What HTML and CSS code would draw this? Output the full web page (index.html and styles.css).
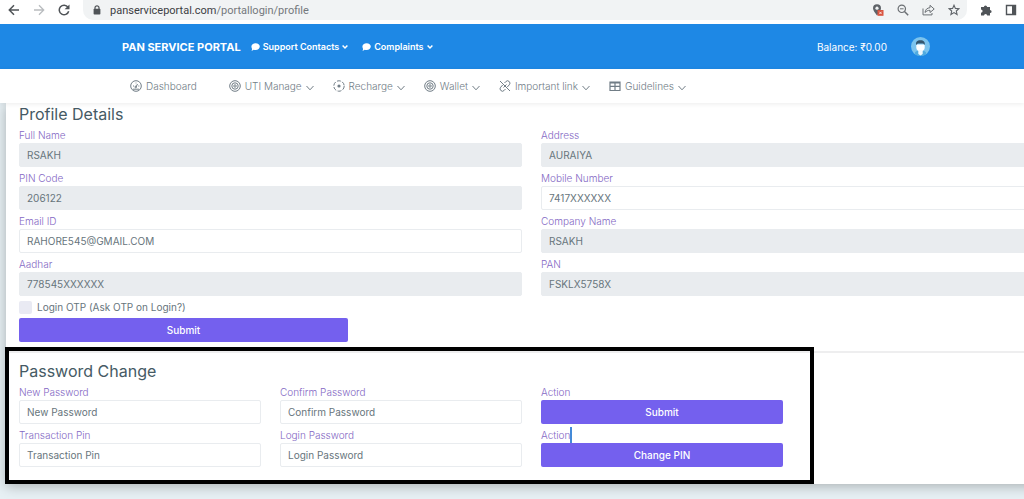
FILE: index.html
```html
<!DOCTYPE html>
<html lang="en">
<head>
<meta charset="utf-8">
<meta name="viewport" content="width=device-width, initial-scale=1">
<title>Profile - PAN Service Portal</title>
<link rel="stylesheet" href="styles.css">
</head>
<body>
<svg class="sprite" aria-hidden="true">
  <symbol id="chev" viewBox="0 0 8 6"><path d="M.5 1 4 4.800 7.500 1" fill="none" stroke="currentColor"/></symbol>
  <symbol id="caret" viewBox="0 0 6 6"><path d="M.6 1.500 3 4l2.400-2.500" fill="none" stroke="currentColor" stroke-width="1.500"/></symbol>
  <symbol id="chat" viewBox="0 0 9 8"><path d="M4.600.3C7 .3 8.800 1.700 8.800 3.600S7 7 4.600 7c-.7 0-1.300-.1-1.900-.3-.6.5-1.500.9-2.500.9.500-.5.900-1.100.9-1.700C.7 5.300.4 4.500.4 3.600.4 1.700 2.200.3 4.600.3z" fill="currentColor"/></symbol>
  <symbol id="target" viewBox="0 0 12 12"><g fill="none" stroke="currentColor"><circle cx="6" cy="6" r="5.300"/><circle cx="6" cy="6" r="3.200"/><circle cx="6" cy="6" r="1.200"/></g></symbol>
</svg>

<div class="browser">
  <button class="tool" aria-label="Back"><svg width="12" height="12" viewBox="0 0 12 12"><path d="M11 6H1.500M6 1.300 1.300 6 6 10.700" fill="none" stroke="#4f5357" stroke-width="1.500"/></svg></button>
  <button class="tool" aria-label="Forward"><svg width="12" height="12" viewBox="0 0 12 12"><path d="M1 6h9.500M6 1.300 10.700 6 6 10.700" fill="none" stroke="#b9bcbf" stroke-width="1.300"/></svg></button>
  <button class="tool" aria-label="Reload"><svg width="12" height="12" viewBox="0 0 12 12"><path d="M10 3.200A4.800 4.800 0 1 0 10.700 7.300" fill="none" stroke="#4f5357" stroke-width="1.500"/><path d="M11.500.4v4.900H6.600z" fill="#4f5357"/></svg></button>
  <div class="address">
    <svg width="8" height="10" viewBox="0 0 8 10"><path d="M2 4V2.800a2 2 0 0 1 4 0V4" fill="none" stroke="#4f5357" stroke-width="1.200"/><rect x=".6" y="3.700" width="6.800" height="5.800" rx=".8" fill="#4f5357"/></svg>
    <span class="url">panserviceportal.com<span class="path">/portallogin/profile</span></span>
    <div class="address-tools">
      <button class="tool" aria-label="Location blocked"><svg width="12" height="12" viewBox="0 0 12 12"><path d="M5 .2a4 4 0 0 0-4 4c0 2.600 4 7.200 4 7.200s4-4.600 4-7.200a4 4 0 0 0-4-4z" fill="#5f6368"/><circle cx="5" cy="4.200" r="1.600" fill="#f1f3f4"/><rect x="5.500" y="6" width="6" height="5.800" fill="#d8513c"/><path d="m7.300 7.700 2.400 2.400m0-2.400-2.400 2.400" stroke="#fff" stroke-width=".8"/></svg></button>
      <button class="tool" aria-label="Zoom"><svg width="12" height="12" viewBox="0 0 12 12"><g fill="none" stroke="#6c7074"><circle cx="4.800" cy="4.800" r="3.700" stroke-width="1.200"/><path d="m7.500 7.500 3.700 3.700" stroke-width="1.500"/><path d="M3 4.800h3.600"/></g></svg></button>
      <button class="tool" aria-label="Share"><svg width="13" height="12" viewBox="0 0 13 12"><path d="M1 4.500v6.400h9V9M3 8.500c.3-3 2.200-4.600 5-4.800V1.300L12.200 5 8 8.500V6.300C5.800 6.300 4.300 7 3 8.500z" fill="none" stroke="#6c7074"/></svg></button>
      <button class="tool" aria-label="Bookmark"><svg width="12" height="12" viewBox="0 0 12 12"><path d="m6 1.200 1.400 3.200 3.500.3-2.600 2.300.8 3.500L6 8.600l-3.100 1.900.8-3.500L1.100 4.700l3.500-.3z" fill="none" stroke="#5f6368" stroke-width="1.100"/></svg></button>
    </div>
  </div>
  <button class="tool" aria-label="Extensions"><svg width="12" height="12" viewBox="0 0 12 12"><path d="M1 3h2.900a1.600 1.600 0 1 1 3.200 0H10v2.900a1.600 1.600 0 1 1 0 3.200V11.500H7.200a1.600 1.600 0 0 0-3.200 0H1V8.700a1.600 1.600 0 0 0 0-3.200z" fill="#505458"/></svg></button>
  <button class="tool" aria-label="Side panel"><svg width="12" height="12" viewBox="0 0 12 12"><path d="M1.500 1.500h9v9h-9z" fill="none" stroke="#505458" stroke-width="1.400"/><path d="M7 1h4v10H7z" fill="#505458"/></svg></button>
</div>

<header class="header">
  <a class="brand" href="#">PAN SERVICE PORTAL</a>
  <a class="head-link" href="#"><svg width="9" height="8"><use href="#chat"/></svg>Support Contacts<svg width="6" height="6"><use href="#caret"/></svg></a>
  <a class="head-link" href="#"><svg width="9" height="8"><use href="#chat"/></svg>Complaints<svg width="6" height="6"><use href="#caret"/></svg></a>
  <span class="balance">Balance: ₹0.00</span>
  <button class="avatar" aria-label="Account"><svg width="19" height="19" viewBox="0 0 19 19"><circle cx="9.500" cy="9.500" r="9.500" fill="#7cc4ee"/><path d="M3.500 17c.3-2.600 2.600-3.500 6-3.500s5.700.9 6 3.500a9.500 9.500 0 0 1-12 0z" fill="#4faae0"/><path d="M5.300 7.500h8.400v3.300c0 2-1.800 3.600-4.200 3.600s-4.200-1.600-4.200-3.600z" fill="#fff"/><path d="M7.300 13h4.400v4l-2.200 1.500L7.300 17z" fill="#eef8fd"/><path d="M5.200 8c-.8-3 1-4.800 4.500-4.700 2.800 0 4.700 1.700 4 4.700l-1.500-1.400H6.800z" fill="#35566e"/></svg></button>
</header>

<nav class="menu">
  <a class="menu-item wide" href="#"><svg width="12" height="12" viewBox="0 0 12 12"><g fill="none" stroke="currentColor"><circle cx="6" cy="6" r="5.300"/><path d="M2.800 9.200h6.400M5.800 7.300 7.500 4M3 6h1M8.300 6h1M6 2.600v.8"/><circle cx="5.700" cy="7" r=".8"/></g></svg>Dashboard</a>
  <a class="menu-item" href="#"><svg width="12" height="12"><use href="#target"/></svg>UTI Manage<svg class="chev" width="8" height="6"><use href="#chev"/></svg></a>
  <a class="menu-item" href="#"><svg width="12" height="12" viewBox="0 0 12 12"><circle cx="6" cy="6" r="5.200" fill="none" stroke="currentColor" stroke-dasharray="4 1.440"/><circle cx="6" cy="6" r="1.600" fill="currentColor"/></svg>Recharge<svg class="chev" width="8" height="6"><use href="#chev"/></svg></a>
  <a class="menu-item" href="#"><svg width="12" height="12"><use href="#target"/></svg>Wallet<svg class="chev" width="8" height="6"><use href="#chev"/></svg></a>
  <a class="menu-item" href="#"><svg width="12" height="12" viewBox="0 0 12 12"><path d="m5.500 3 1.300-1.400a2.300 2.300 0 0 1 3.500 3.200L8.300 7M6.500 9l-1.300 1.400A2.300 2.300 0 0 1 1.700 7.200L3.700 5M1 1l10 10M4.500 7.500l3-3" fill="none" stroke="currentColor"/></svg>Important link<svg class="chev" width="8" height="6"><use href="#chev"/></svg></a>
  <a class="menu-item" href="#"><svg width="12" height="12" viewBox="0 0 12 12"><path d="M1 2h10v8.500H1zM1 3h10M1 6.300h10M6 2v8.500" fill="none" stroke="currentColor" stroke-width="1.200"/></svg>Guidelines<svg class="chev" width="8" height="6"><use href="#chev"/></svg></a>
</nav>

<main class="page">
  <div class="card">
    <form class="section profile">
      <h2 class="title">Profile Details</h2>
      <div class="grid halves">
        <div class="field"><label for="name">Full Name</label><input id="name" value="RSAKH" readonly class="locked"></div>
        <div class="field"><label for="addr">Address</label><input id="addr" value="AURAIYA" readonly class="locked"></div>
        <div class="field"><label for="pincode">PIN Code</label><input id="pincode" value="206122" readonly class="locked"></div>
        <div class="field"><label for="mobile">Mobile Number</label><input id="mobile" value="7417XXXXXX"></div>
        <div class="field"><label for="email">Email ID</label><input id="email" value="RAHORE545@GMAIL.COM"></div>
        <div class="field"><label for="company">Company Name</label><input id="company" value="RSAKH" readonly class="locked"></div>
        <div class="field"><label for="aadhar">Aadhar</label><input id="aadhar" value="778545XXXXXX" readonly class="locked"></div>
        <div class="field"><label for="pan">PAN</label><input id="pan" value="FSKLX5758X" readonly class="locked"></div>
      </div>
      <div class="check"><input type="checkbox" id="otp"><label for="otp">Login OTP (Ask OTP on Login?)</label></div>
      <div class="grid thirds"><button type="button" class="btn">Submit</button></div>
    </form>
    <form class="section password">
      <div class="highlight"></div>
      <h2 class="title">Password Change</h2>
      <div class="grid quarters">
        <div class="field"><label for="newpw">New Password</label><input id="newpw" type="password" placeholder="New Password"></div>
        <div class="field"><label for="confpw">Confirm Password</label><input id="confpw" type="password" placeholder="Confirm Password"></div>
        <div class="field"><label for="dosubmit">Action</label><button type="button" id="dosubmit" class="btn">Submit</button></div>
        <div class="field row-start"><label for="tpin">Transaction Pin</label><input id="tpin" type="password" placeholder="Transaction Pin"></div>
        <div class="field"><label for="loginpw">Login Password</label><input id="loginpw" type="password" placeholder="Login Password"></div>
        <div class="field"><label for="dopin" class="with-cursor">Action</label><button type="button" id="dopin" class="btn">Change PIN</button></div>
      </div>
    </form>
  </div>
</main>
</body>
</html>
```
FILE: styles.css
```css
* { box-sizing: border-box; }

body {
  margin: 0;
  min-height: 100vh;
  overflow: hidden;
  background: #e7f0f4;
  font-family: Inter, "Liberation Sans", sans-serif;
  font-size: 10px;
  color: #67757c;
}

a { color: inherit; text-decoration: none; }
button, input { font: inherit; color: inherit; margin: 0; }
svg { flex: none; display: block; }
.sprite { position: absolute; width: 0; height: 0; }

/* Browser toolbar */
.browser {
  display: flex;
  align-items: center;
  gap: 13px;
  height: 24px;
  padding: 0 7px 4px 8px;
  background: #fff;
}
.tool { border: 0; padding: 0; background: none; }
.address {
  flex: 1;
  display: flex;
  align-items: center;
  gap: 9px;
  height: 20px;
  padding: 0 7px 0 10px;
  border-radius: 0 0 10px 10px;
  background: #f1f3f4;
}
.url { font-family: Roboto, sans-serif; font-size: 11px; color: #3c4043; }
.path { color: #74787c; }
.address-tools { display: flex; gap: 13px; margin-left: auto; }

/* Blue header */
.header {
  display: flex;
  align-items: center;
  height: 45px;
  padding: 0 94px 0 122px;
  background: #1e88e5;
  color: #fff;
}
.brand { font-size: 11px; font-weight: 700; margin-right: 10px; }
.head-link {
  display: flex;
  align-items: center;
  gap: 3px;
  margin-right: 14px;
  font-size: 9px;
  font-weight: 600;
}
.balance { margin-left: auto; margin-right: 24px; font-weight: 400; }
.avatar { border: 0; padding: 0; background: none; }

/* Menu */
.menu {
  position: relative;
  display: flex;
  align-items: center;
  gap: 19px;
  height: 34px;
  padding: 0 130px;
  background: #fff;
  box-shadow: 0 1px 5px rgba(0, 0, 0, .08);
  font-weight: 300;
  color: #717d86;
  white-space: nowrap;
}
.menu-item { display: flex; align-items: center; gap: 4px; }
.wide { margin-right: 13px; }
.chev { margin-top: 3px; }

/* Profile card, wider than the window on its right side */
.page { padding-left: 6px; }
.card {
  margin-right: -33px;
  background: #fff;
  box-shadow: 0 2px 12px rgba(0, 0, 0, .28);
}
.section { padding: 0 13px; }
.profile { padding-bottom: 9px; border-bottom: 2px solid #eeeeef; }
.password { position: relative; padding-top: 7px; padding-bottom: 17px; }
.title {
  margin: 0 0 2px;
  font-size: 16px;
  font-weight: 400;
  line-height: 22px;
  color: #455a64;
}
.grid { display: grid; gap: 3px 19px; }
.halves { grid-template-columns: repeat(2, 1fr); }
.thirds { grid-template-columns: repeat(3, 1fr); }
.quarters { grid-template-columns: repeat(4, 1fr); }
.row-start { grid-column-start: 1; }

.field { display: flex; flex-direction: column; }
.field label { line-height: 16px; font-weight: 300; color: #8468c4; }
.field input {
  width: 100%;
  height: 24px;
  padding: 0 7px;
  border: 1px solid #e9ecef;
  border-radius: 2px;
  background: #fff;
}
.field input::placeholder { color: #67757c; opacity: 1; }
.field .locked { background: #e9ecef; }

.check { display: flex; align-items: center; gap: 5px; height: 22px; }
.check input {
  appearance: none;
  width: 13px;
  height: 13px;
  border-radius: 2px;
  background: #e9eaf3;
}
.btn {
  height: 24px;
  padding: 0;
  border: 0;
  border-radius: 2px;
  background: #7460ee;
  color: #fff;
  font-weight: 500;
}
.with-cursor { align-self: flex-start; border-right: 2px solid #438ad8; }

/* Black frame marking the password section */
.highlight {
  position: absolute;
  inset: -6px auto 0 -1px;
  width: 77%;
  border: 4px solid #000;
  pointer-events: none;
}
```
